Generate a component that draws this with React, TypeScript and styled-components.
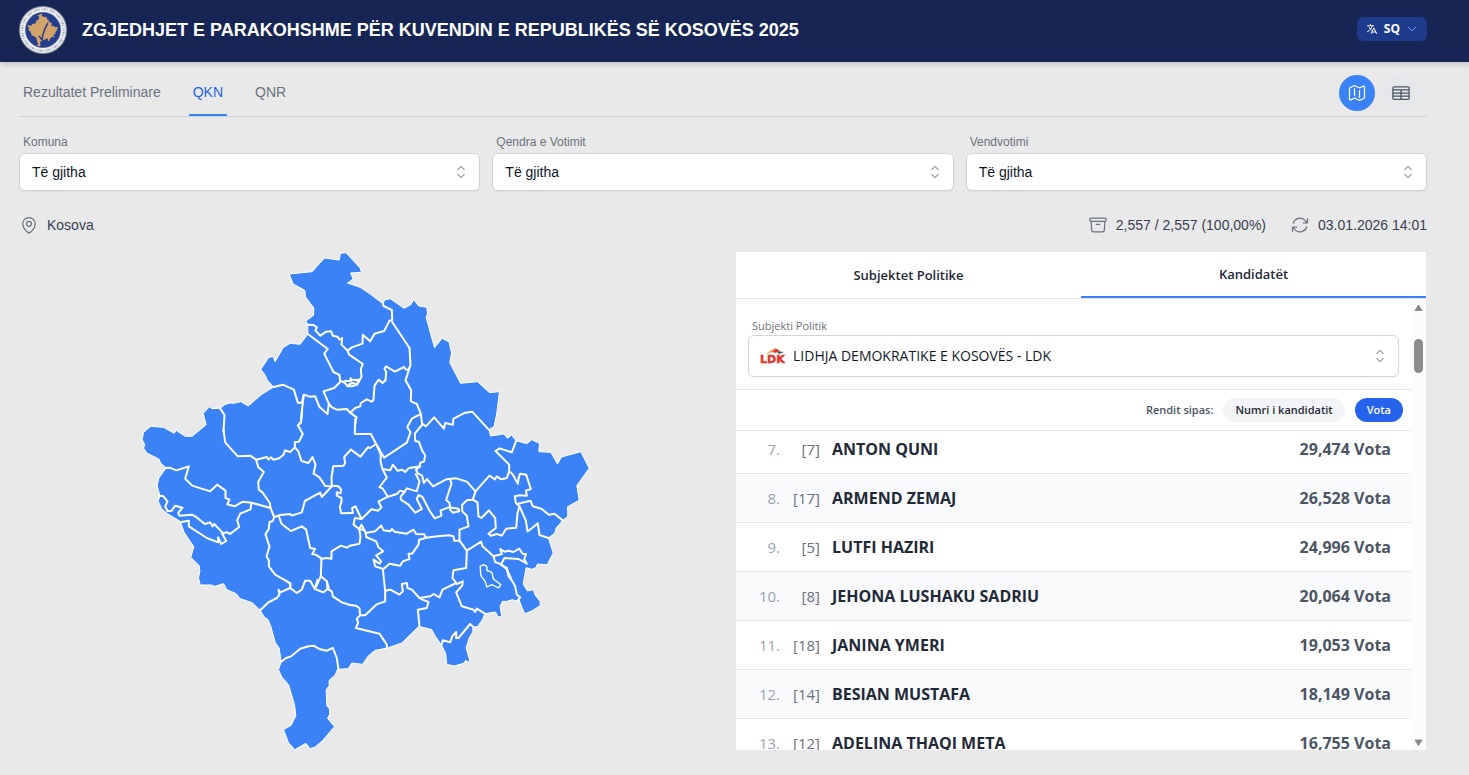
import React, { useLayoutEffect, useRef } from "react";
import styled, { createGlobalStyle, css } from "styled-components";
import {
  HiChevronUpDown,
  HiOutlineArchiveBox,
  HiOutlineArrowPath,
  HiOutlineChevronDown,
  HiOutlineLanguage,
  HiOutlineMap,
  HiOutlineMapPin,
  HiOutlineTableCells,
} from "react-icons/hi2";

const sans = `"Liberation Sans", Arial, sans-serif`;
const ui = `"Open Sans", "Noto Sans", sans-serif`;

const GlobalStyle = createGlobalStyle`
  *, *::before, *::after { box-sizing: border-box; }
  body { margin: 0; background: #e9e9e9; font-family: ${sans}; font-size: 14px; line-height: 20px; color: #1f2937; }
  button, select { font: inherit; color: inherit; }
`;

/* ---------- map geometry: survey sheets, each with its own origin ---------- */

type Sheet = "nw" | "ne" | "w" | "e" | "s" | "se";
const origin: Record<Sheet, [number, number]> = {
  nw: [390, 735],
  ne: [1050, 735],
  w: [390, 1230],
  e: [1050, 1230],
  s: [540, 1740],
  se: [1050, 1590],
};

const outline: [Sheet, string][] = [
  ["nw", "219,506 238,486 244,492 270,491 284,480 300,475 310,476 332,471 354,484 395,449 430,427 412,407 404,390 392,374 416,338 429,336 435,351 459,309 480,296 510,299 533,268 533,240 527,229 550,212 551,190 526,157 524,137 489,118 477,88 546,81 583,40 627,46 631,26 647,24 690,70 694,83 661,85 669,103 652,115 690,128 720,148"],
  ["ne", "98,177 103,166 120,162 162,191 182,180 190,165 206,184 230,188 232,206 228,218 253,309 276,281 297,292 304,325 299,354 331,416 382,411 418,444 448,441 440,505 432,545"],
  ["e", "417,60 421,79 461,73 472,86 484,76 498,93 530,102 545,90 568,101 566,126 602,128 622,163 634,142 692,126 717,176 680,228 687,272 652,291 653,320 638,332 618,355 614,370 595,385 609,430 591,465 562,463 558,473 545,479 528,474 519,523"],
  ["se", "532,184 550,180 554,195 570,215 570,228 545,244 524,252 515,233 506,208 499,215 487,210 470,215 457,215 450,230 455,263 443,260 436,247 404,252 398,268 382,291 368,292 368,306 357,325 348,355 358,390 357,399 347,392 340,401 312,409 290,404 286,370 274,347 253,316 245,300 206,290 190,305 155,340 112,355 75,362 55,378 37,404"],
  ["s", "515,250 504,267 472,269 465,286 447,302 447,318 438,330 440,378 448,388 449,403 442,416 463,441 427,483 405,502 390,507 377,491 344,510 325,489 310,450 333,437 347,408 343,375 325,315 305,292 295,270 303,246 297,205 285,188 272,140 263,119 252,112 240,92 216,69 180,57 168,42 140,30 130,12 104,20 94,16 60,16"],
  ["w", "205,505 209,485 207,468 182,443 191,411 162,368 150,335 112,312 95,298 84,275 89,258 81,228 86,205 108,175 93,162 86,148 50,130 40,115 44,105 36,90 40,68 62,50 100,53 132,71 138,62 165,80 186,80 228,45"],
];

const borders: Record<Sheet, string[]> = {
  nw: [
    "533,240 550,241 560,248 556,258 570,273 588,261 603,260 608,273 622,276 628,285 636,280 634,300 652,318 665,308 697,297",
    "533,268 593,313 582,327 610,382 628,391 630,412 612,430 580,440 596,477 592,508 568,487 555,455 538,456 521,450 515,474 503,474 491,435 458,420 430,427",
    "521,450 515,500 512,535 503,542",
    "652,318 657,330 698,358 692,373 694,396 681,420 665,425 652,425 645,415 630,407",
    "645,408 662,410 661,401 668,406 684,405 680,420 668,415 655,420",
    "596,477 605,488 620,495 650,493 660,504",
    "660,504 679,518 675,540",
    "270,491 283,511 280,560",
  ],
  ne: [
    "37,296 38,270 60,290 73,267 102,259 118,228 126,226 125,196 100,184 98,177",
    "126,232 178,310 181,362 174,376 166,374 162,367 134,381 108,365 103,372 108,382 106,407 97,415 86,405 73,423 70,466 64,471 50,464 32,475 30,485 15,490 0,505",
    "178,370 166,407 183,437 182,470 200,478 212,507 216,540",
  ],
  w: [
    "280,60 285,98 323,140 360,138 378,150 410,142 415,150 422,143 430,150 447,146 460,135 465,122 480,127 494,113 494,97 506,96 518,73 503,47 513,35 516,0",
    "378,150 384,172 401,187 384,217 386,240 397,248 419,280 421,295 364,279 338,276 313,290 291,284 298,270 286,265 286,243 261,225 240,245 186,228 165,207 176,170 139,182 118,174 106,175",
    "494,113 504,124 514,154 535,160 547,142 556,165 550,192 568,203 585,229 605,230",
    "605,230 604,205 609,170 640,168 645,160 642,142 662,120",
    "605,230 575,262 570,249 524,274 515,308 485,318 480,313 450,316 432,322 421,295",
    "605,228 625,230 633,240 631,251 620,248 620,258 634,265 634,276 629,291 633,311 668,310",
    "660,408 650,414 632,408 604,425 604,447 590,445 574,447 557,435 546,433 555,418 540,415 528,360 515,350 482,364 454,342 446,320",
    "574,447 572,500 555,537",
    "572,500 590,515 596,535",
    "432,322 428,334 418,337 416,357 406,374 418,411 409,440 416,452 416,470 435,495 481,521 480,535",
    "364,279 361,299 330,312 321,332 327,352 300,373 289,367 280,372 252,343 247,350 240,338 224,343 198,322 185,315 148,318 144,310 157,294 135,288 124,304 112,304 105,290 112,275 100,260 88,258",
    "150,338 176,333 176,350 230,385 264,398 264,383 273,403 288,394 275,370",
  ],
  e: [
    "15,28 14,73 62,73 78,103 60,115 53,113 31,141 2,120",
    "78,103 102,144 170,99 181,68 171,52 185,27 212,13",
    "216,45 194,72 195,94 206,96 217,125 225,136 222,155 210,160 208,172 197,180 204,192 216,198 221,220 230,208 249,230 288,209 318,206 350,216 376,245 418,198 434,209 440,200 453,209 470,205 477,185 477,165 436,124 448,116 485,128 498,93",
    "216,42 227,50 252,23 281,57 285,40 308,45 310,27 345,9 366,6 418,62",
    "78,103 92,135 91,155 97,178 120,182 128,165 142,183 156,180 165,187 175,176 210,170",
    "97,178 110,204 88,232 98,237 113,261 85,276 94,293 84,303 64,299 34,328 16,290 6,295 8,310",
    "113,261 140,253 150,243 163,247 170,236 200,245 208,215 197,193",
    "163,247 152,260 152,270 175,285 195,309 215,298 200,268 205,256 217,262 238,303 254,326 274,318 271,303 287,296 297,293 325,297 327,305 308,309 300,300",
    "300,209 304,222 288,271 298,280 300,296",
    "376,245 368,270 382,278 385,320 394,325 416,302 435,325 437,355 415,372 422,378 440,373 455,378 468,357 498,354 502,310 508,290 497,280 494,260 508,257 530,258 527,243 542,238 528,195 510,192 506,202 503,222 487,193 477,185",
    "368,270 350,272 336,285 336,305 350,318 355,350 328,360 328,393",
    "500,283 541,273 548,290 575,298 596,315 612,312 638,332",
    "508,290 527,333 532,365 546,355 563,341 568,376 595,385",
    "34,328 14,325 10,345 27,358 34,345 47,370 75,365 93,347 100,362 120,365 125,358 133,366 170,372 190,360 198,373 222,374 228,384 262,380 298,377 310,380 312,393 328,393 350,423 393,396 397,410 430,440 435,457 455,465 470,480 482,505",
    "27,358 42,362",
    "47,370 48,382 78,395 85,413 99,425 78,437 93,455 88,462 70,450 75,470 100,478 118,462 150,468 158,455 178,448 175,432 186,432 205,405 207,390 228,384",
    "27,358 31,380 28,402 0,408",
    "430,440 455,433 450,418 463,426 475,423 490,427 507,417 518,433 528,433 522,448 530,462 505,448 463,445 452,465",
    "350,423 348,475",
  ],
  se: [
    "348,115 310,122 307,145 316,157 320,163 338,155 336,168 318,188 335,230 370,240 375,247 380,237 404,252",
    "98,118 105,183 120,180 148,195 158,185 155,163 170,160 172,175 185,180 208,205 240,200 250,193 268,203 277,180 318,160",
    "105,183 105,215 78,225 45,257 30,257 28,236 18,228 0,226",
    "208,205 215,209 235,217 230,235 203,240 208,290",
    "30,257 20,267 24,280 17,295 88,312 110,345 110,355",
    "274,347 278,332 300,338 306,320 318,307 318,325 325,325 360,283 370,292",
    "455,107 470,115 475,140 485,152 495,170 500,195 510,203 500,215",
  ],
  s: [
    "240,92 265,68 290,55 298,45 295,30 300,38 330,25 330,12 312,0",
    "330,25 350,40 365,30 375,3 390,3 404,28 412,0",
    "404,28 430,38 442,28 440,5",
    "442,28 455,35 458,50 485,68 510,76",
    "303,246 318,235 333,230 360,207 385,200 400,198 420,209 440,213 458,205 470,235 475,269",
  ],
};

const enclave =
  "390,110 400,105 410,110 410,122 425,128 430,148 452,165 445,175 425,165 410,172 405,155 392,138";

const outlinePath =
  "M" +
  outline
    .flatMap(([sheet, points]) =>
      points.split(" ").map((p) => {
        const [x, y] = p.split(",").map(Number);
        return `${x + origin[sheet][0]} ${y + origin[sheet][1]}`;
      })
    )
    .join("L") +
  "Z";

const KosovoMap = () => (
  <MapSvg viewBox="421 757 1347 1494" role="img" aria-label="Kosova">
    <path d={outlinePath} fill="#3b82f6" stroke="#fff" strokeWidth={3} strokeLinejoin="round" />
    <g fill="none" stroke="#fff" strokeWidth={6} strokeLinejoin="round" strokeLinecap="round">
      {(Object.keys(borders) as Sheet[]).map((sheet) => (
        <g key={sheet} transform={`translate(${origin[sheet].join(" ")})`}>
          {borders[sheet].map((points) => (
            <polyline key={points} points={points} />
          ))}
        </g>
      ))}
      <g transform={`translate(${origin.se.join(" ")})`}>
        <polygon points={enclave} strokeWidth={4} />
      </g>
    </g>
  </MapSvg>
);

const Emblem = () => (
  <svg width="48" height="48" viewBox="0 0 48 48" role="img" aria-label="KQZ">
    <circle cx="24" cy="24" r="24" fill="#8d93a3" />
    <circle cx="24" cy="24" r="20.500" fill="none" stroke="#eceef0" strokeWidth="5" />
    <circle cx="24" cy="24" r="20.800" fill="none" stroke="#a9adb6" strokeWidth="2" strokeDasharray="1 1 2 1 1 2" />
    <circle cx="24" cy="24" r="17.500" fill="#233f8e" />
    <path d={outlinePath} fill="#d3a26b" transform="translate(-1 -9) scale(.0226 .022)" />
    <path d="M20 30l3 4q1-9 6-17" fill="none" stroke="#233f8e" strokeWidth="1.500" />
  </svg>
);

const LdkLogo = () => (
  <svg width="26" height="18" viewBox="0 0 26 18" role="img" aria-label="Logo">
    <path d="M6 8Q10 2 16 3L14 1l7 3-5 2Q10 4 6 8z" fill="#f0a04b" />
    <path d="M12 3q3-1 4 0l-2-2 5 2-4 3z" fill="#e5342b" />
    <path d="M16 4l8 1-5 2z" fill="#4b5563" />
    <text x="0" y="16" fill="#e5342b" stroke="#e5342b" strokeWidth="0.500" fontFamily="'DejaVu Sans', sans-serif" fontWeight="700" fontSize="11">LDK</text>
  </svg>
);

/* ---------- page parts ---------- */

const Header = styled.header`
  display: flex;
  align-items: center;
  gap: 15px;
  height: 62px;
  padding: 0 42px 2px 19px;
  background: #172554;
  box-shadow: 0 3px 5px rgba(0, 0, 0, 0.14);
`;

const Title = styled.h1`
  flex: 1;
  margin: 0;
  font-size: 18px;
  line-height: 28px;
  color: #fff;
`;

const LanguageButton = styled.button`
  display: flex;
  align-items: center;
  gap: 6px;
  height: 24px;
  margin-bottom: 2px;
  padding: 0 9px;
  border: 0;
  border-radius: 6px;
  background: #1e3a8a;
  color: #fff;
  font: 700 12px/16px ${ui};
  svg { stroke-width: 2; }
  svg:last-child { color: #60a5fa; }
`;

const Main = styled.main`
  padding: 0 42px 0 19px;
`;

const NavBar = styled.div`
  display: flex;
  justify-content: space-between;
  height: 55px;
  border-bottom: 1px solid #d1d5db;
`;

const Nav = styled.nav`
  display: flex;
  gap: 24px;
`;

const NavLink = styled.a<{ $active?: boolean }>`
  display: flex;
  align-items: center;
  padding: 8px 4px 0;
  border-bottom: 2px solid ${(p) => (p.$active ? "#3b82f6" : "transparent")};
  color: ${(p) => (p.$active ? "#2563eb" : "#6b7280")};
  text-decoration: none;
`;

const ViewSwitch = styled.div`
  display: flex;
  gap: 8px;
  padding: 13px 8px 0 0;
`;

const RoundButton = styled.button<{ $active?: boolean }>`
  display: grid;
  place-items: center;
  width: 36px;
  height: 36px;
  padding: 0;
  border: 0;
  border-radius: 50%;
  background: ${(p) => (p.$active ? "#3b82f6" : "#e5e7eb")};
  color: ${(p) => (p.$active ? "#fff" : "#4b5563")};
`;

const Filters = styled.div`
  display: grid;
  grid-template-columns: repeat(3, 1fr);
  gap: 12px;
  padding-top: 16px;
`;

const Field = styled.div`
  display: flex;
  flex-direction: column;
  gap: 2px;
`;

const Label = styled.label`
  padding-left: 4px;
  font-size: 12px;
  line-height: 18px;
  color: #6b7280;
`;

const SelectBox = styled.div`
  position: relative;
  & > svg {
    position: absolute;
    top: 0;
    bottom: 0;
    margin: auto 0;
    pointer-events: none;
  }
`;

const ChevronIcon = styled(HiChevronUpDown)`
  right: 9px;
  color: #9ca3af;
`;

const PartyMark = styled.div`
  position: absolute;
  inset: 0 auto 0 12px;
  display: flex;
  align-items: center;
  pointer-events: none;
`;

const Select = styled.select<{ $withLogo?: boolean }>`
  appearance: none;
  display: block;
  width: 100%;
  height: ${(p) => (p.$withLogo ? 42 : 38)}px;
  padding: 0 40px 0 ${(p) => (p.$withLogo ? 44 : 12)}px;
  border: 1px solid #d1d5db;
  border-radius: 6px;
  background: #fff;
  box-shadow: 0 1px 2px rgba(0, 0, 0, 0.05);
  color: #111827;
`;

const StatusRow = styled.div`
  display: flex;
  align-items: center;
  gap: 24px;
  padding: 24px 0 17px;
`;

const Status = styled.div<{ $grow?: boolean }>`
  display: flex;
  align-items: center;
  gap: 8px;
  color: #374151;
  ${(p) => p.$grow && css`flex: 1;`}
  svg { color: #6b7280; }
`;

const Results = styled.div`
  display: grid;
  grid-template-columns: 1fr 1fr;
  gap: 24px;
  height: calc(100vh - 277px);
  min-height: 320px;
`;

const MapSvg = styled.svg`
  display: block;
  width: 100%;
  height: 100%;
  min-height: 0;
`;

const Panel = styled.section`
  display: flex;
  flex-direction: column;
  min-height: 0;
  margin: 0 1px;
  background: #fff;
  font-family: ${ui};
`;

const PanelTabs = styled.div`
  display: flex;
  flex: none;
  height: 47px;
  border-bottom: 1px solid #e5e7eb;
`;

const PanelTab = styled.button<{ $active?: boolean }>`
  flex: 1;
  padding: 0;
  border: 0;
  border-bottom: ${(p) => (p.$active ? "2px solid #3b82f6" : "0")};
  background: none;
  font-size: 13px;
  font-weight: 600;
  color: #1f2937;
`;

const PanelBody = styled.div`
  display: flex;
  flex: 1;
  min-height: 0;
`;

const PanelContent = styled.div`
  display: flex;
  flex: 1;
  flex-direction: column;
  min-width: 0;
`;

const PartyPicker = styled.div`
  padding: 18px 12px 12px;
  border-bottom: 1px solid #e5e7eb;
  ${Field} { gap: 0; }
  ${Label} { font-size: 11px; }
  ${Select} { font-weight: 500; }
`;

const SortBar = styled.div`
  display: flex;
  flex: none;
  align-items: center;
  justify-content: flex-end;
  gap: 10px;
  height: 41px;
  padding-right: 8px;
  border-bottom: 1px solid #e5e7eb;
  font-size: 11px;
  font-weight: 600;
  color: #4b5563;
`;

const Pill = styled.button<{ $active?: boolean }>`
  height: 24px;
  padding: 0 12px;
  border: 0;
  border-radius: 12px;
  background: ${(p) => (p.$active ? "#2563eb" : "#f3f4f6")};
  color: ${(p) => (p.$active ? "#fff" : "#1f2937")};
`;

const ListViewport = styled.div`
  flex: 1;
  min-height: 0;
  overflow-y: auto;
  scrollbar-width: none;
`;

const CandidateTable = styled.table`
  width: 100%;
  border-spacing: 0;
  font-size: 15px;
`;

const CandidateRow = styled.tr`
  height: 49px;
  &:nth-child(even) { background: #f9fafb; }
`;

const Cell = styled.td<{ $kind: "rank" | "number" | "name" | "votes" }>`
  padding: 0;
  border-bottom: 1px solid #e5e7eb;
  text-align: right;
  ${(p) => p.$kind === "rank" && css`width: 44px; color: #9ca3af;`}
  ${(p) => p.$kind === "number" && css`width: 40px; color: #6b7280;`}
  ${(p) => p.$kind === "name" && css`padding-left: 12px; text-align: left; font-size: 16px; font-weight: 700;`}
  ${(p) => p.$kind === "votes" && css`padding-right: 20px; font-size: 16px; font-weight: 700; color: #4b5563;`}
`;

const ScrollTrack = styled.div`
  display: flex;
  flex-direction: column;
  align-items: center;
  width: 15px;
  padding: 5px 0 3px;
  background: #fcfcfc;
`;

const ScrollThumb = styled.div`
  width: 9px;
  height: 34px;
  margin: 28px 0 auto;
  border-radius: 5px;
  background: #8b8b8b;
`;

const candidates = [
  [7, 7, "ANTON QUNI", "29,474"],
  [8, 17, "ARMEND ZEMAJ", "26,528"],
  [9, 5, "LUTFI HAZIRI", "24,996"],
  [10, 8, "JEHONA LUSHAKU SADRIU", "20,064"],
  [11, 18, "JANINA YMERI", "19,053"],
  [12, 14, "BESIAN MUSTAFA", "18,149"],
  [13, 12, "ADELINA THAQI META", "16,755"],
] as const;

const filters = [
  ["komuna", "Komuna"],
  ["qendra", "Qendra e Votimit"],
  ["vendvotimi", "Vendvotimi"],
];

export default function App() {
  const list = useRef<HTMLDivElement>(null);
  useLayoutEffect(() => {
    if (list.current) list.current.scrollTop = 6;
  }, []);

  return (
    <>
      <GlobalStyle />
      <Header>
        <Emblem />
        <Title>ZGJEDHJET E PARAKOHSHME PËR KUVENDIN E REPUBLIKËS SË KOSOVËS 2025</Title>
        <LanguageButton type="button">
          <HiOutlineLanguage size={12} />
          SQ
          <HiOutlineChevronDown size={12} />
        </LanguageButton>
      </Header>
      <Main>
        <NavBar>
          <Nav>
            <NavLink href="#preliminare">Rezultatet Preliminare</NavLink>
            <NavLink href="#qkn" $active>QKN</NavLink>
            <NavLink href="#qnr">QNR</NavLink>
          </Nav>
          <ViewSwitch>
            <RoundButton type="button" aria-label="Harta" $active><HiOutlineMap size={20} /></RoundButton>
            <RoundButton type="button" aria-label="Tabela"><HiOutlineTableCells size={20} /></RoundButton>
          </ViewSwitch>
        </NavBar>
        <Filters>
          {filters.map(([id, label]) => (
            <Field key={id}>
              <Label htmlFor={id}>{label}</Label>
              <SelectBox>
                <Select id={id}><option>Të gjitha</option></Select>
                <ChevronIcon size={20} />
              </SelectBox>
            </Field>
          ))}
        </Filters>
        <StatusRow>
          <Status $grow><HiOutlineMapPin size={20} />Kosova</Status>
          <Status><HiOutlineArchiveBox size={20} />2,557 / 2,557 (100,00%)</Status>
          <Status><HiOutlineArrowPath size={20} />03.01.2026 14:01</Status>
        </StatusRow>
        <Results>
          <KosovoMap />
          <Panel>
            <PanelTabs>
              <PanelTab type="button">Subjektet Politike</PanelTab>
              <PanelTab type="button" $active>Kandidatët</PanelTab>
            </PanelTabs>
            <PanelBody>
              <PanelContent>
                <PartyPicker>
                  <Field>
                    <Label htmlFor="subjekti">Subjekti Politik</Label>
                    <SelectBox>
                      <Select id="subjekti" $withLogo>
                        <option>LIDHJA DEMOKRATIKE E KOSOVËS - LDK</option>
                      </Select>
                      <PartyMark><LdkLogo /></PartyMark>
                      <ChevronIcon size={20} />
                    </SelectBox>
                  </Field>
                </PartyPicker>
                <SortBar>
                  Rendit sipas:
                  <Pill type="button">Numri i kandidatit</Pill>
                  <Pill type="button" $active>Vota</Pill>
                </SortBar>
                <ListViewport ref={list}>
                  <CandidateTable>
                    <tbody>
                      {candidates.map(([rank, number, name, votes]) => (
                        <CandidateRow key={rank}>
                          <Cell $kind="rank">{rank}.</Cell>
                          <Cell $kind="number">[{number}]</Cell>
                          <Cell $kind="name">{name}</Cell>
                          <Cell $kind="votes">{votes} Vota</Cell>
                        </CandidateRow>
                      ))}
                    </tbody>
                  </CandidateTable>
                </ListViewport>
              </PanelContent>
              <ScrollTrack aria-hidden>
                <svg width="9" height="7"><path d="M1 6.500L4.500 1 8 6.500z" fill="#8b8b8b" stroke="#8b8b8b" strokeLinejoin="round" /></svg>
                <ScrollThumb />
                <svg width="9" height="8"><path d="M1 1L4.500 6.500 8 1z" fill="#8b8b8b" stroke="#8b8b8b" strokeLinejoin="round" /></svg>
              </ScrollTrack>
            </PanelBody>
          </Panel>
        </Results>
      </Main>
    </>
  );
}
